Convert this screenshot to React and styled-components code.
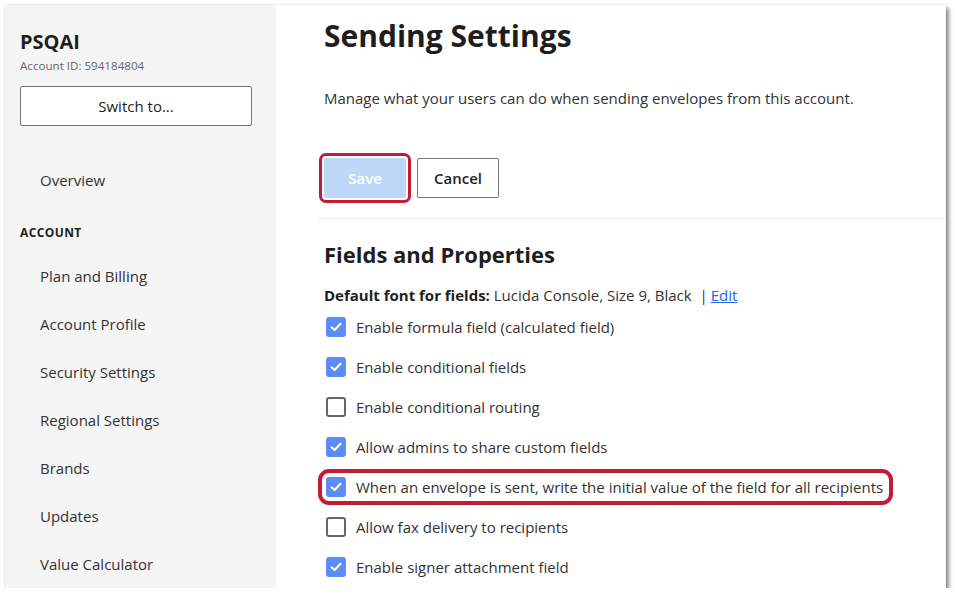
import React from 'react'
import styled, { createGlobalStyle } from 'styled-components'

const GlobalStyle = createGlobalStyle`
    html, body {
        margin: 0;
        padding: 0;
        background: #ffffff;
    }
    body {
        font-family: "Open Sans", "Liberation Sans", sans-serif;
        color: #1e1e1e;
    }
`

const Frame = styled('div')`
    margin: 5px 0 0 5px;
    width: 941px;
    height: 583px;
    display: flex;
    overflow: hidden;
    background: #ffffff;
    box-shadow: 3px 3px 4px rgba(0, 0, 0, 0.45), 0 0 2px rgba(0, 0, 0, 0.15);
`

const Sidebar = styled('aside')`
    width: 271px;
    flex-shrink: 0;
    background: #f5f5f5;
    padding: 28px 24px 0 15px;
    box-sizing: border-box;
`

const AccountName = styled('div')`
    font-size: 20px;
    font-weight: 700;
    line-height: 18px;
    color: #1e1e1e;
`

const AccountId = styled('div')`
    margin-top: 8px;
    font-size: 11.6px;
    line-height: 14px;
    color: #666666;
`

const SwitchButton = styled('button')`
    display: block;
    margin-top: 13px;
    width: 232px;
    height: 40px;
    background: #ffffff;
    border: 1px solid #767676;
    border-radius: 2px;
    font-family: inherit;
    font-size: 15px;
    color: #1e1e1e;
    cursor: pointer;
`

const Nav = styled('nav')`
    display: flex;
    flex-direction: column;
    margin-top: 30px;
`

const NavItem = styled('a')`
    display: flex;
    align-items: center;
    height: 48px;
    padding-left: 20px;
    font-size: 15px;
    color: #333333;
    text-decoration: none;
`

const NavHeading = styled('div')`
    display: flex;
    align-items: center;
    height: 48px;
    padding-top: 8px;
    box-sizing: border-box;
    font-size: 12px;
    font-weight: 700;
    letter-spacing: 0.4px;
    text-transform: uppercase;
    color: #1e1e1e;
`

const Main = styled('main')`
    flex: 1;
    padding: 14px 0 0 48px;
    box-sizing: border-box;
`

const Title = styled('h1')`
    margin: 0;
    font-size: 30px;
    line-height: 34px;
    font-weight: 700;
    color: #1e1e1e;
`

const Lead = styled('p')`
    margin: 35px 0 0;
    font-size: 15px;
    line-height: 20px;
    color: #333333;
`

const Actions = styled('div')`
    display: flex;
    gap: 11px;
    margin-top: 50px;
`

const Button = styled('button')`
    width: 82px;
    height: 40px;
    border-radius: 2px;
    font-family: inherit;
    font-size: 15px;
    font-weight: 600;
    cursor: pointer;
    border: 1px solid ${p => p.$primary ? '#bed8f9' : '#767676'};
    background: ${p => p.$primary ? '#bed8f9' : '#ffffff'};
    color: ${p => p.$primary ? '#ffffff' : '#1e1e1e'};
    outline: ${p => p.$marked ? '3px solid #c21c37' : 'none'};
    outline-offset: 2px;
`

const Divider = styled('hr')`
    margin: 20px 0 0 -6px;
    border: 0;
    border-top: 1px solid #ececec;
`

const SectionTitle = styled('h2')`
    margin: 22px 0 0;
    font-size: 22px;
    line-height: 26px;
    font-weight: 700;
    color: #1e1e1e;
`

const FontLine = styled('div')`
    margin-top: 18px;
    font-size: 15px;
    line-height: 20px;
    color: #333333;

    b {
        color: #1e1e1e;
    }
`

const EditLink = styled('a')`
    color: #1f66e5;
    text-decoration: underline;
    margin-left: 3px;
`

const Options = styled('div')`
    display: flex;
    flex-direction: column;
    align-items: flex-start;
    gap: 20px;
    margin-top: 12px;
    padding-left: 2px;
`

const Option = styled('label')`
    display: flex;
    align-items: center;
    gap: 10px;
    height: 20px;
    font-size: 15px;
    color: #333333;
    border-radius: 3px;
    outline: ${p => p.$marked ? '4px solid #c21c37' : 'none'};
    outline-offset: 4px;
    padding-right: 2px;
`

const Box = styled('span')`
    display: flex;
    align-items: center;
    justify-content: center;
    width: 20px;
    height: 20px;
    box-sizing: border-box;
    border-radius: 3px;
    background: ${p => p.$checked ? '#5b8cf7' : '#ffffff'};
    border: 2px solid ${p => p.$checked ? '#5b8cf7' : '#666666'};
`

const Check = () => (
    <svg width="12" height="10" viewBox="0 0 12 10" fill="none">
        <path d="M1.5 5.2 L4.6 8 L10.5 1.8" stroke="#ffffff" strokeWidth="2" strokeLinecap="round" strokeLinejoin="round" />
    </svg>
)

const navItems = ['Plan and Billing', 'Account Profile', 'Security Settings', 'Regional Settings', 'Brands', 'Updates', 'Value Calculator']

const options = [
    { label: 'Enable formula field (calculated field)', checked: true },
    { label: 'Enable conditional fields', checked: true },
    { label: 'Enable conditional routing', checked: false },
    { label: 'Allow admins to share custom fields', checked: true },
    { label: 'When an envelope is sent, write the initial value of the field for all recipients', checked: true, marked: true },
    { label: 'Allow fax delivery to recipients', checked: false },
    { label: 'Enable signer attachment field', checked: true },
]

const App = () => {
    return (
        <>
            <GlobalStyle />
            <Frame>
                <Sidebar>
                    <AccountName>PSQAI</AccountName>
                    <AccountId>Account ID: 594184804</AccountId>
                    <SwitchButton>Switch to...</SwitchButton>
                    <Nav>
                        <NavItem>Overview</NavItem>
                        <NavHeading>Account</NavHeading>
                        {navItems.map(item => <NavItem key={item}>{item}</NavItem>)}
                    </Nav>
                </Sidebar>
                <Main>
                    <Title>Sending Settings</Title>
                    <Lead>Manage what your users can do when sending envelopes from this account.</Lead>
                    <Actions>
                        <Button $primary $marked>Save</Button>
                        <Button>Cancel</Button>
                    </Actions>
                    <Divider />
                    <SectionTitle>Fields and Properties</SectionTitle>
                    <FontLine>
                        <b>Default font for fields:</b> Lucida Console, Size 9, Black &nbsp;|<EditLink>Edit</EditLink>
                    </FontLine>
                    <Options>
                        {options.map(opt => (
                            <Option key={opt.label} $marked={opt.marked}>
                                <Box $checked={opt.checked}>{opt.checked && <Check />}</Box>
                                {opt.label}
                            </Option>
                        ))}
                    </Options>
                </Main>
            </Frame>
        </>
    )
}

export default App
